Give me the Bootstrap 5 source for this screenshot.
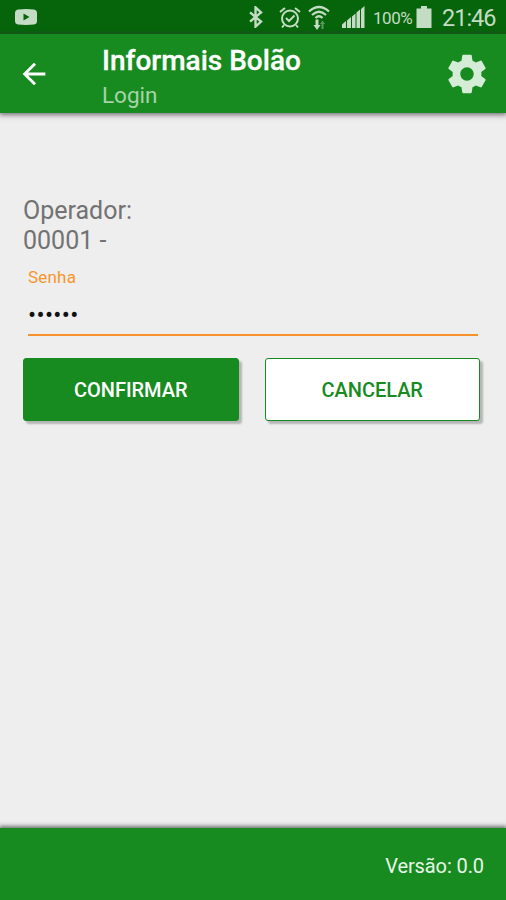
<!DOCTYPE html>
<html lang="pt-BR">
<head>
<meta charset="utf-8">
<meta name="viewport" content="width=device-width, initial-scale=1">
<title>Informais Bolão</title>
<link href="https://cdn.jsdelivr.net/npm/bootstrap@5.3.0/dist/css/bootstrap.min.css" rel="stylesheet">
<style>
body{font-family:Roboto,"Liberation Sans",sans-serif;background:#eee;height:900px;overflow:hidden}
svg{display:block;flex:none}
.status{height:34px;background:#06650b;color:#c3dcc3;padding-left:15px}
.status svg{fill:#c3dcc3}
.alarm{margin-left:14px}
.wifi{margin-left:6px}
.signal{margin-left:10px}
.battery{margin-left:4px}
.pct{font-size:17px;line-height:20px;width:39px;margin-left:8px;letter-spacing:-.45px;padding-top:1px}
.clock{font-size:23.5px;line-height:28px;width:54px;margin-left:10px;margin-right:10px;letter-spacing:-1px;padding-top:1px}
.appbar{height:79px;background:#178b1f;box-shadow:0 1px 5px 1px rgba(60,45,60,.65);padding:0 16px 0 17px;position:relative}
.titles{margin-left:51px;height:79px;padding-top:10px}
.titles h1{font-size:28px;font-weight:500;line-height:34px;letter-spacing:0;-webkit-text-stroke:.3px #fff}
.titles p{font-size:22.5px;line-height:28px;color:#a6d3a8;padding-top:3px}
.page{padding:83px 24px 0 23px}
.operator{font-size:25px;line-height:30px;color:#727272}
.field{margin:0 4px 0 5px;border-bottom:2px solid #f7922a;height:80px;padding-top:10px}
.field label{font-size:17px;line-height:22px;letter-spacing:.2px;color:#f7962b}
.field input,.field input:focus{height:34px;font-size:24px;letter-spacing:.35px;color:#111;line-height:34px;margin-top:10px}
.actions{gap:26px;margin:22px 2px 0 0}
.actions .btn{height:63px;font-size:20px;font-weight:500;border-radius:3px;box-shadow:3px 3px 2px rgba(0,0,0,.24);--bs-btn-padding-x:0;padding-top:7px;letter-spacing:-.05px}
.go{--bs-btn-color:#fff;--bs-btn-bg:#178b1f;--bs-btn-border-color:#178b1f}
.stop{--bs-btn-color:#178b1f;--bs-btn-bg:#fff;--bs-btn-border-color:#178b1f}
.bottom{height:72px;background:#178b1f;color:#e9f6e9;font-size:20px;letter-spacing:-.1px;padding:3px 22px 0 0;box-shadow:0 -1px 4px 1px rgba(60,60,60,.7)}
</style>
</head>
<body class="d-flex flex-column">
<div class="status d-flex align-items-center">
  <svg width="22" height="16" viewBox="0 0 22 16"><path fill-rule="evenodd" d="M3 .5Q11-.4 19 .5 22 1 22 4v8q0 3-3 3.500-8 .8-16 0Q0 15 0 12V4Q0 1 3 .5zM8.500 4.500v7l6-3.500z"/></svg>
  <svg class="ms-auto" width="18" height="22" viewBox="0 0 18 24"><path d="M2.500 7l12 10-6 5.500V1.500l6 5.500-12 10" fill="none" stroke="#c3dcc3" stroke-width="2.600"/></svg>
  <svg class="alarm" width="22" height="23" viewBox="0 0 22 23"><g fill="none" stroke="#c3dcc3" stroke-width="2"><circle cx="11" cy="12.500" r="8"/><path d="M1 6l5-4M21 6l-5-4M7 12l3 3 5.500-5.500M5 19l-2 2.500M17 19l2 2.500"/></g></svg>
  <svg class="wifi" width="24" height="25" viewBox="0 0 24 25"><g fill="none" stroke="#c3dcc3" stroke-width="2.200"><path d="M2 6.500Q12-2.500 22 6.500M5 10Q12 3.500 19 10M8.500 13Q12 9.500 15.500 13"/></g><path d="M8.500 14.500h3V20h2L10 25l-3.500-5h2z"/><path d="M16.500 24h-2v-5h-1.500l2.500-3.500 2.500 3.500h-1.500z" opacity=".45"/></svg>
  <svg class="signal" width="24" height="23" viewBox="0 0 24 23"><path d="M1 18.500L5 15v7H1zM6 14.500l4-3.500v11H6zM11 10.500l3.500-3v14.500H11zM15.500 6.500L19 3.500V22h-3.500zM20 3l3.500-3v22H20z"/></svg>
  <span class="pct">100%</span>
  <svg class="battery" width="16" height="22" viewBox="0 0 16 22"><path d="M5 0h6v2.500h4.500V22H.5V2.500H5z"/></svg>
  <span class="clock">21:46</span>
</div>
<header class="appbar d-flex align-items-center">
  <svg width="34" height="34" viewBox="0 0 24 24" fill="#fff"><path d="M20 11H7.830l5.590-5.590L12 4l-8 8 8 8 1.410-1.410L7.830 13H20z"/></svg>
  <div class="titles text-white">
    <h1 class="m-0">Informais Bolão</h1>
    <p class="m-0">Login</p>
  </div>
  <svg class="ms-auto" width="46" height="46" viewBox="0 0 24 24" fill="#d5edd6"><path d="M19.430 12.980c.04-.32.070-.64.070-.98s-.03-.66-.07-.98l2.110-1.650c.19-.15.240-.42.120-.64l-2-3.460c-.12-.22-.39-.3-.61-.22l-2.490 1c-.52-.4-1.080-.73-1.690-.98l-.38-2.650C14.460 2.180 14.250 2 14 2h-4c-.25 0-.46.180-.49.420l-.38 2.650c-.61.250-1.170.59-1.690.98l-2.490-1c-.23-.09-.49 0-.61.220l-2 3.460c-.13.220-.07.490.12.640l2.110 1.650c-.04.32-.07.650-.07.980s.03.660.070.980l-2.110 1.650c-.19.150-.24.420-.12.640l2 3.460c.12.220.39.300.61.220l2.490-1c.52.400 1.080.730 1.690.980l.38 2.650c.03.240.24.420.49.420h4c.25 0 .46-.18.490-.42l.38-2.650c.61-.25 1.170-.59 1.690-.98l2.490 1c.23.090.49 0 .61-.22l2-3.460c.12-.22.070-.49-.12-.64l-2.110-1.650zM12 15.500c-1.930 0-3.500-1.570-3.500-3.500s1.570-3.500 3.500-3.500 3.500 1.570 3.500 3.500-1.570 3.500-3.500 3.500z"/></svg>
</header>
<main class="page flex-grow-1">
  <div class="operator">Operador:<br>00001 -</div>
  <div class="field">
    <label class="d-block" for="senha">Senha</label>
    <input id="senha" type="password" value="123456" class="form-control-plaintext p-0 border-0">
  </div>
  <div class="actions d-flex">
    <button type="button" class="btn go w-50">CONFIRMAR</button>
    <button type="button" class="btn stop w-50">CANCELAR</button>
  </div>
</main>
<footer class="bottom d-flex align-items-center justify-content-end">Versão: 0.0</footer>
<script src="https://cdn.jsdelivr.net/npm/bootstrap@5.3.0/dist/js/bootstrap.bundle.min.js"></script>
</body>
</html>
